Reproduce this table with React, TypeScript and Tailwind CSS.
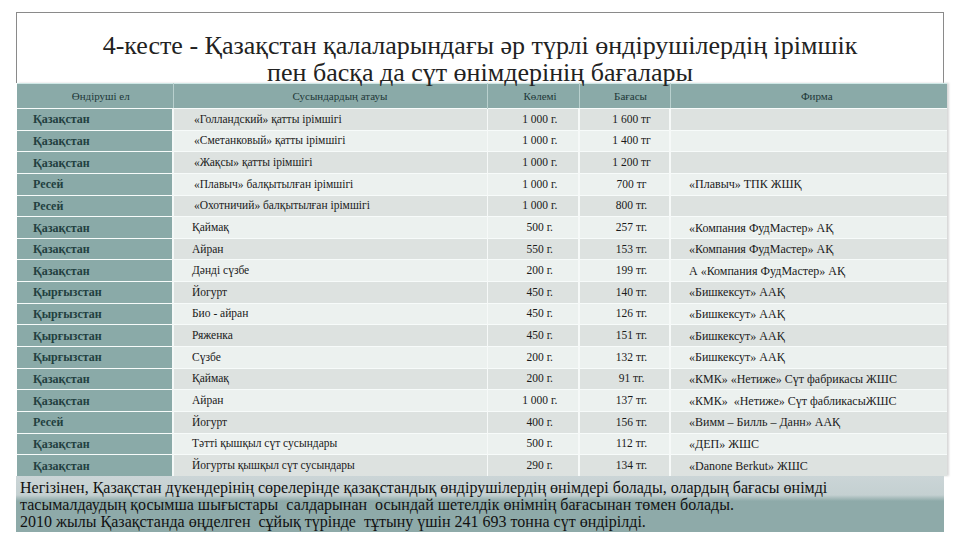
import React from "react";

type Row = [string, string, string, string, string];

const rows: Row[] = [
  ["Қазақстан", "«Голландский» қатты ірімшігі", "1 000 г.", "1 600 тг", ""],
  ["Қазақстан", "«Сметанковый» қатты ірімшігі", "1 000 г.", "1 400 тг", ""],
  ["Қазақстан", "«Жақсы» қатты ірімшігі", "1 000 г.", "1 200 тг", ""],
  ["Ресей", "«Плавыч» балқытылған ірімшігі", "1 000 г.", "700 тг", "«Плавыч» ТПК ЖШҚ"],
  ["Ресей", "«Охотничий» балқытылған ірімшігі", "1 000 г.", "800 тг.", ""],
  ["Қазақстан", "Қаймақ", "500 г.", "257 тг.", "«Компания ФудМастер» АҚ"],
  ["Қазақстан", "Айран", "550 г.", "153 тг.", "«Компания ФудМастер» АҚ"],
  ["Қазақстан", "Дәнді сүзбе", "200 г.", "199 тг.", "А «Компания ФудМастер» АҚ"],
  ["Қырғызстан", "Йогурт", "450 г.", "140 тг.", "«Бишкексут» ААҚ"],
  ["Қырғызстан", "Био - айран", "450 г.", "126 тг.", "«Бишкексут» ААҚ"],
  ["Қырғызстан", "Ряженка", "450 г.", "151 тг.", "«Бишкексут» ААҚ"],
  ["Қырғызстан", "Сүзбе", "200 г.", "132 тг.", "«Бишкексут» ААҚ"],
  ["Қазақстан", "Қаймақ", "200 г.", "91 тг.", "«КМК» «Нетиже» Сүт фабрикасы ЖШС"],
  ["Қазақстан", "Айран", "1 000 г.", "137 тг.", "«КМК»  «Нетиже» Сүт фабликасыЖШС"],
  ["Ресей", "Йогурт", "400 г.", "156 тг.", "«Вимм – Билль – Данн» ААҚ"],
  ["Қазақстан", "Тәтті қышқыл сүт сусындары", "500 г.", "112 тг.", "«ДЕП» ЖШС"],
  ["Қазақстан", "Йогурты қышқыл сүт сусындары", "290 г.", "134 тг.", "«Danone Berkut» ЖШС"],
];

export default function App() {
  return (
    <div className="w-[960px] h-[540px] bg-white overflow-hidden pt-[12px] [font-family:Liberation_Serif,Times_New_Roman,serif]">
      {/* title box */}
      <div className="ml-[16px] w-[928px] h-[71px] border-t border-x border-[#8a8a8a] bg-white text-center text-[#222] text-[26px] leading-[27px] pt-[19px]">
        <div>4-кесте - Қазақстан қалаларындағы әр түрлі өндірушілердің ірімшік</div>
        <div>пен басқа да сүт өнімдерінің бағалары</div>
      </div>

      <table className="ml-[17px] w-[930px] border-collapse table-fixed shadow-[2px_0_2px_#d8d8d8]">
        <colgroup>
          <col className="w-[156px]" />
          <col className="w-[314px]" />
          <col className="w-[92px]" />
          <col className="w-[91px]" />
          <col className="w-[277px]" />
        </colgroup>
        <thead>
          <tr className="h-[25px] bg-[#8aaaa8] text-[#1e3838] text-[11px] border-t border-[#cfe8e6]">
            <th className="font-normal text-center pl-[12px] border-r border-[#b9d0ce]">Өндіруші ел</th>
            <th className="font-normal text-center pl-[20px] border-r border-[#b9d0ce]">Сусындардың атауы</th>
            <th className="font-normal text-center pl-[14px] border-r border-[#b9d0ce]">Көлемі</th>
            <th className="font-normal text-center pl-[12px] border-r border-[#b9d0ce]">Бағасы</th>
            <th className="font-normal text-center pl-[16px]">Фирма</th>
          </tr>
        </thead>
        <tbody>
          {rows.map((r, i) => (
            <tr
              key={i}
              className={`h-[21.65px] border-t border-[#f7fbfa] text-[#1a1a1a] ${
                i % 2 === 0 ? "bg-[#dde2e0]" : "bg-[#ecf1ef]"
              }`}
            >
              <td className="bg-[#8aaaa8] text-[#22403f] text-[12px] font-bold pl-[16px] border-r-2 border-[#f4f8f7] whitespace-nowrap">
                {r[0]}
              </td>
              <td className={`${i < 5 ? "pl-[20px]" : "pl-[18px]"} text-[11.5px] whitespace-nowrap border-r border-[#f6f9f8]`}>
                {r[1]}
              </td>
              <td className="text-center text-[11.5px] pl-[14px] whitespace-nowrap border-r-2 border-[#f6f9f8]">{r[2]}</td>
              <td className="text-center text-[11.5px] pl-[14px] whitespace-nowrap border-r-2 border-[#f6f9f8]">{r[3]}</td>
              <td className="pl-[18px] text-[12px] whitespace-pre">{r[4]}</td>
            </tr>
          ))}
        </tbody>
      </table>

      {/* note */}
      <div className="ml-[16px] w-[928px] text-[16px] leading-[17px] text-[#111] bg-[linear-gradient(to_bottom,#cbd5d7_0px,#c4d0d1_19px,#8eaaa9_25px,#8eaaa9_100%)] pt-[3px] pb-[2px] pl-[4px]">
        <div className="whitespace-pre">Негізінен, Қазақстан дүкендерінің сөрелерінде қазақстандық өндірушілердің өнімдері болады, олардың бағасы өнімді</div>
        <div className="whitespace-pre">тасымалдаудың қосымша шығыстары  салдарынан  осындай шетелдік өнімнің бағасынан төмен болады.</div>
        <div className="whitespace-pre">2010 жылы Қазақстанда өңделген  сұйық түрінде  тұтыну үшін 241 693 тонна сүт өндірілді.</div>
      </div>
    </div>
  );
}
